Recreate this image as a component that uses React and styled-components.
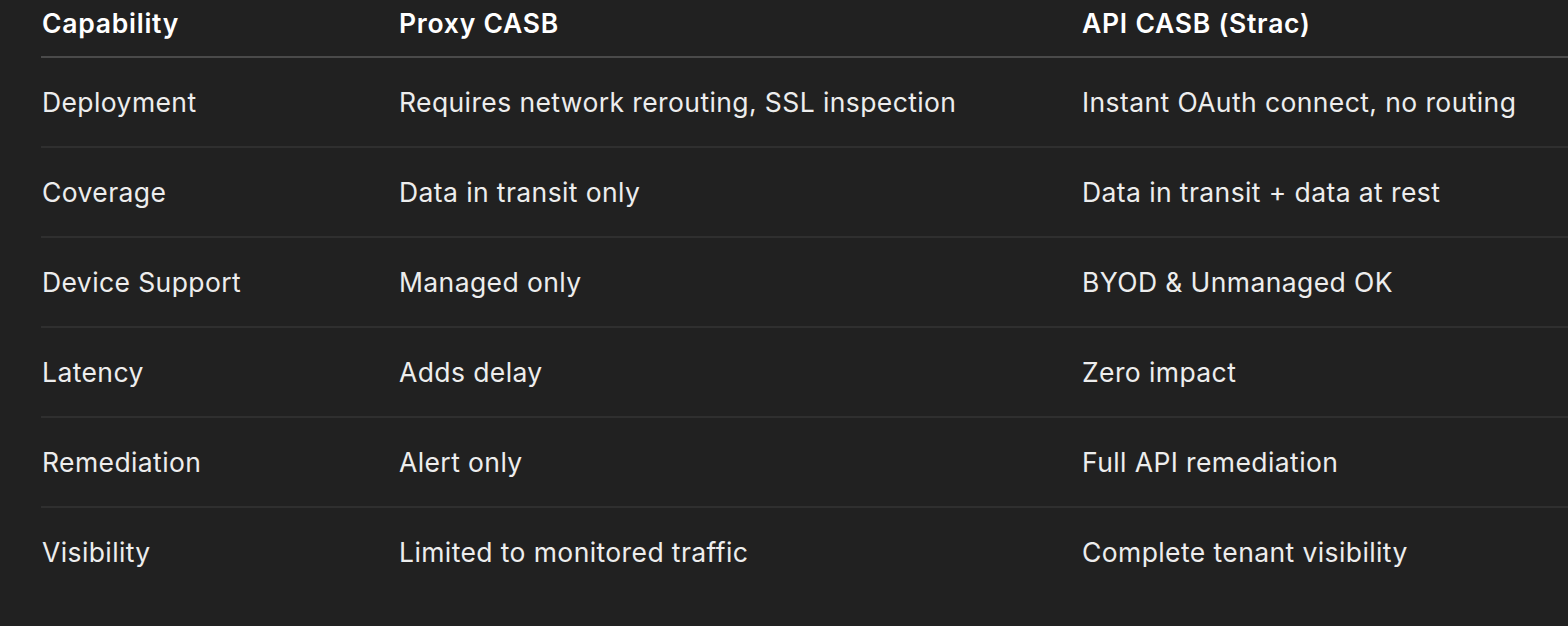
import styled, { createGlobalStyle } from "styled-components";

const GlobalStyle = createGlobalStyle`
  html, body {
    margin: 0;
    padding: 0;
    background: #212121;
  }
  body {
    font-family: Inter, "Noto Sans", "Liberation Sans", sans-serif;
    -webkit-font-smoothing: antialiased;
  }
`;

const rows = [
  ["Deployment", "Requires network rerouting, SSL inspection", "Instant OAuth connect, no routing"],
  ["Coverage", "Data in transit only", "Data in transit + data at rest"],
  ["Device Support", "Managed only", "BYOD & Unmanaged OK"],
  ["Latency", "Adds delay", "Zero impact"],
  ["Remediation", "Alert only", "Full API remediation"],
  ["Visibility", "Limited to monitored traffic", "Complete tenant visibility"],
];

export default function App() {
  return (
    <>
      <GlobalStyle />
      <Page>
        <Table>
          <HeadRow>
            <HeadCell>Capability</HeadCell>
            <HeadCell>Proxy CASB</HeadCell>
            <HeadCell>API CASB (Strac)</HeadCell>
          </HeadRow>
          {rows.map((r, i) => (
            <Row key={r[0]} $last={i === rows.length - 1}>
              {r.map((c) => (
                <Cell key={c}>{c}</Cell>
              ))}
            </Row>
          ))}
        </Table>
      </Page>
    </>
  );
}

const Page = styled.div`
  height: 626px;
  padding-left: 41px;
  overflow: hidden;
`;

const Table = styled.div`
  display: flex;
  flex-direction: column;
`;

const HeadRow = styled.div`
  display: grid;
  grid-template-columns: 357px 683px 1fr;
  height: 56px;
  border-bottom: 2px solid #4a4a4a;
`;

const HeadCell = styled.div`
  padding: 7px 0 0 1px;
  line-height: 32px;
  font-size: 26.5px;
  letter-spacing: 0.75px;
  font-weight: 600;
  color: #ffffff;
`;

const Row = styled.div`
  display: grid;
  grid-template-columns: 357px 683px 1fr;
  align-items: center;
  height: 88px;
  border-bottom: 2px solid ${(p) => (p.$last ? "transparent" : "#2f2f2f")};
`;

const Cell = styled.div`
  padding-left: 1px;
  font-size: 26.5px;
  letter-spacing: 0.4px;
  font-weight: 400;
  color: #ededed;
  white-space: nowrap;
`;
